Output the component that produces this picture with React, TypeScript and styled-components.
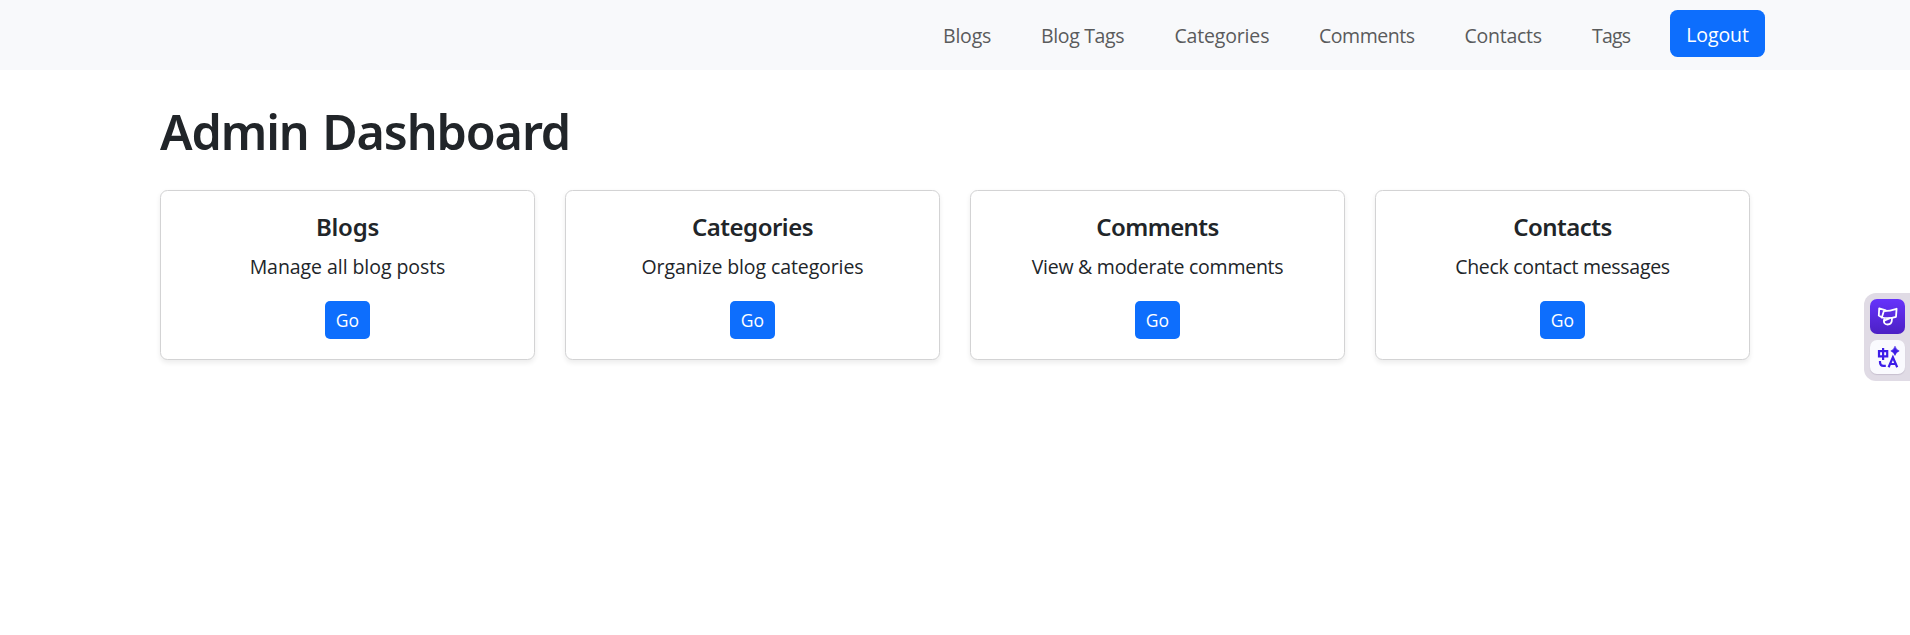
import React from 'react';
import styled, { createGlobalStyle } from 'styled-components';

const GlobalStyle = createGlobalStyle`
  *, *::before, *::after { box-sizing: border-box; }
  body {
    margin: 0;
    min-height: 100vh;
    background: #fff;
    color: #212529;
    font-family: "Open Sans", "Noto Sans", sans-serif;
    font-size: 19.5px;
    line-height: 30px;
  }
`;

const Navbar = styled.nav`
  height: 70px;
  padding: 10px 145px 10px 0;
  display: flex;
  justify-content: flex-end;
  align-items: flex-start;
  background: #f8f9fb;
`;

const NavList = styled.ul`
  display: flex;
  margin: 0 14px 0 0;
  padding: 0;
  list-style: none;
`;

const NavLink = styled.a<{ $width: number; $tracking: number }>`
  display: block;
  width: ${({ $width }) => $width}px;
  padding: 11px 0 9px;
  color: #5a5b5c;
  letter-spacing: ${({ $tracking }) => $tracking}px;
  text-decoration: none;
  white-space: nowrap;
`;

const LogoutButton = styled.button`
  width: 95px;
  height: 47px;
  padding: 2px 0 0;
  border: 0;
  border-radius: 7.5px;
  background: #0d6efd;
  color: #fff;
  font: inherit;
  letter-spacing: -0.1px;
`;

const Main = styled.main`
  width: 1590px;
  margin: 30px auto 0;
`;

const Title = styled.h1`
  margin: 0;
  padding: 1px 0 29px;
  font-family: "Noto Sans", sans-serif;
  font-size: 48.5px;
  font-weight: 600;
  line-height: 60px;
  letter-spacing: -1.1px;
  word-spacing: 2px;
`;

const CardGrid = styled.div`
  display: grid;
  grid-template-columns: repeat(4, 1fr);
  gap: 30px;
`;

const Card = styled.section`
  height: 170px;
  padding: 21px 20px 20px;
  display: flex;
  flex-direction: column;
  align-items: center;
  border: 1px solid #d3d3d4;
  border-radius: 7.5px;
  background: #fff;
  box-shadow: 0 2.5px 5px rgba(0, 0, 0, 0.075);
`;

const CardTitle = styled.h5<{ $tracking: number }>`
  margin: 0 0 10px;
  font-family: "Noto Sans", sans-serif;
  font-size: 24px;
  font-weight: 600;
  line-height: 30px;
  letter-spacing: ${({ $tracking }) => $tracking}px;
`;

const CardText = styled.p<{ $tracking: number }>`
  margin: 0 0 19px;
  letter-spacing: ${({ $tracking }) => $tracking}px;
  white-space: nowrap;
`;

const GoButton = styled.a`
  width: 45px;
  height: 38px;
  border-radius: 5px;
  background: #0d6efd;
  color: #fff;
  font-size: 17.5px;
  line-height: 38px;
  text-align: center;
  text-decoration: none;
`;

const FloatingDock = styled.aside`
  position: fixed;
  top: 293px;
  right: 0;
  width: 46px;
  height: 88px;
  padding: 6px 0 0 6px;
  display: flex;
  flex-direction: column;
  gap: 6px;
  border-radius: 12px 0 0 12px;
  background: #e0dbe5;
`;

const DockButton = styled.button<{ $primary?: boolean }>`
  width: 35px;
  height: ${({ $primary }) => ($primary ? 35 : 34)}px;
  padding: 0;
  border: 0;
  border-radius: 7px;
  background: ${({ $primary }) =>
    $primary ? 'linear-gradient(#6633fb, #4c20c4)' : '#fafafe'};
  box-shadow: ${({ $primary }) => ($primary ? 'none' : '0 1px 1px rgba(60, 40, 90, 0.15)')};

  svg { display: block; }
`;

const links = [
  { label: 'Blogs', width: 98, tracking: -0.2 },
  { label: 'Blog Tags', width: 133.5, tracking: -0.35 },
  { label: 'Categories', width: 144.5, tracking: -0.17 },
  { label: 'Comments', width: 145.5, tracking: -0.47 },
  { label: 'Contacts', width: 127.5, tracking: -0.26 },
  { label: 'Tags', width: 64, tracking: -0.8 },
];

const cards = [
  { title: 'Blogs', titleTracking: -0.25, text: 'Manage all blog posts', tracking: -0.06 },
  { title: 'Categories', titleTracking: -0.5, text: 'Organize blog categories', tracking: -0.1 },
  { title: 'Comments', titleTracking: -0.6, text: 'View & moderate comments', tracking: -0.25 },
  { title: 'Contacts', titleTracking: -0.55, text: 'Check contact messages', tracking: -0.3 },
];

const RibbonIcon = () => (
  <svg width="35" height="35" viewBox="0 0 35 35" fill="none" stroke="#fff" strokeWidth="1.8" strokeLinejoin="round" strokeLinecap="round">
    <path d="M15.8 11.4 9.2 9.3 8.8 16.5 11.6 18.2" />
    <path d="M11.8 18.5 13.8 12.2Q20 12.2 26.6 9.8L26 17.8Q19 20.2 12 18.5Z" />
    <path d="M14.2 20.2Q13 25.4 17.5 25.5Q22 25.5 22 19.4" />
    <path d="M14.2 21.6 19.5 19.4" />
  </svg>
);

const TranslateIcon = () => (
  <svg width="35" height="34" viewBox="0 0 35 34" fill="none" stroke="#3d1de8" strokeWidth="2.2">
    <path d="M9 11.2H17.2V16.4H9ZM13.1 8V20" />
    <path d="M25 6.2Q26 9.9 29.2 10.9Q26 11.9 25 15.4Q24 11.9 20.8 10.9Q24 9.9 25 6.2Z" fill="#3d1de8" stroke="#3d1de8" strokeWidth="0.6" />
    <path d="M10 21V22.2Q10 25.8 13.5 25.8H15.8" />
    <path d="M18.6 27.2 22.9 17.2 27.2 27.2M20 24H25.8" />
  </svg>
);

export default function App() {
  return (
    <>
      <GlobalStyle />
      <Navbar>
        <NavList>
          {links.map(({ label, width, tracking }) => (
            <li key={label}>
              <NavLink $width={width} $tracking={tracking}>{label}</NavLink>
            </li>
          ))}
        </NavList>
        <LogoutButton>Logout</LogoutButton>
      </Navbar>
      <Main>
        <Title>Admin Dashboard</Title>
        <CardGrid>
          {cards.map(({ title, titleTracking, text, tracking }) => (
            <Card key={title}>
              <CardTitle $tracking={titleTracking}>{title}</CardTitle>
              <CardText $tracking={tracking}>{text}</CardText>
              <GoButton>Go</GoButton>
            </Card>
          ))}
        </CardGrid>
      </Main>
      <FloatingDock>
        <DockButton $primary aria-label="Assistant"><RibbonIcon /></DockButton>
        <DockButton aria-label="Translate"><TranslateIcon /></DockButton>
      </FloatingDock>
    </>
  );
}
